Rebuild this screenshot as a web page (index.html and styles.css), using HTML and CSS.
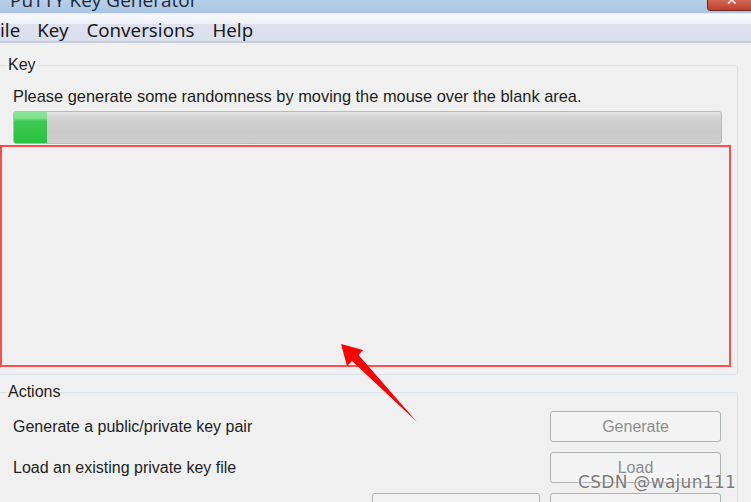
FILE: index.html
```html
<!DOCTYPE html>
<html>
<head>
<meta charset="utf-8">
<link rel="stylesheet" href="styles.css">
</head>
<body>
<div class="window">
  <div class="titlebar">
    <span class="title">PuTTY Key Generator</span>
    <span class="close"><span class="x">✕</span></span>
  </div>
  <div class="menubar">
    <span class="menu m-file">ile</span>
    <span class="menu">Key</span>
    <span class="menu">Conversions</span>
    <span class="menu">Help</span>
  </div>
  <div class="content">
    <fieldset class="group key-group">
      <legend>Key</legend>
      <div class="hint">Please generate some randomness by moving the mouse over the blank area.</div>
      <div class="progress"><div class="fill"></div></div>
      <div class="blank"></div>
    </fieldset>
    <fieldset class="group actions-group">
      <legend>Actions</legend>
      <div class="row">
        <span class="row-label">Generate a public/private key pair</span>
        <button class="btn">Generate</button>
      </div>
      <div class="row">
        <span class="row-label">Load an existing private key file</span>
        <button class="btn">Load</button>
      </div>
      <div class="row last">
        <button class="btn wide"></button>
        <button class="btn"></button>
      </div>
    </fieldset>
  </div>
  <svg class="arrow" width="751" height="502" viewBox="0 0 751 502">
    <polygon points="341,344 363,350 358.5,355 417,422 352,361 347,366" fill="#ff0000"/>
  </svg>
  <div class="watermark">CSDN @wajun111</div>
</div>
</body>
</html>
```
FILE: styles.css
```css
* { box-sizing: border-box; }
html, body { margin: 0; padding: 0; }
body {
  width: 751px;
  height: 502px;
  overflow: hidden;
  background: #f0f0f0;
  font-family: "Liberation Sans", Arial, sans-serif;
  color: #1e1e1e;
}
.window { position: relative; width: 751px; height: 502px; overflow: hidden; }

.titlebar {
  position: relative;
  height: 14px;
  background: linear-gradient(#b8cfe8, #a9c5e2);
  border-bottom: 1px solid #e4edf7;
  overflow: hidden;
}
.title {
  display: block;
  font-family: "Open Sans", "Noto Sans", sans-serif;
  font-size: 19px;
  line-height: 20px;
  margin-top: -10px;
  padding-left: 10px;
  color: #1c2a3a;
}
.close {
  position: absolute;
  right: -6px;
  top: -4px;
  width: 50px;
  height: 15px;
  background: linear-gradient(#d8735f, #c0402c);
  border: 1px solid #6e2a20;
  border-radius: 3px;
  text-align: center;
}
.close .x { color: #fff; font-size: 14px; line-height: 10px; display: block; margin-top: -2px; }

.menubar {
  display: flex;
  align-items: center;
  height: 29px;
  padding-top: 3px;
  background: linear-gradient(#f7f8fc 0%, #f0f2f8 35%, #dde1ef 38%, #dbe0ef 100%);
  border-bottom: 2px solid #c8ccd9;
  font-family: "Noto Sans", "Open Sans", sans-serif;
  font-size: 18.7px;
  color: #1a1a1a;
}
.menu { padding: 0 9px; }
.menu.m-file { padding-left: 0; padding-right: 8px; }

.content {
  display: flex;
  flex-direction: column;
  padding-top: 13px;
}
.group {
  margin: 0;
  border: 1px solid #dbe2e8;
  border-radius: 3px;
  padding: 0;
  min-width: 0;
}
.group legend {
  font-size: 16px;
  padding: 0 1px;
  margin-left: 7px;
  line-height: 18px;
  color: #1e1e1e;
}
.key-group {
  margin-left: -4px;
  width: 742px;
  height: 319px;
  padding-left: 3px;
}
.hint {
  font-size: 16.4px;
  line-height: 18px;
  margin-top: 13px;
  padding-left: 13px;
}
.progress {
  margin: 6px 0 0 13px;
  width: 709px;
  height: 33px;
  border: 1px solid #b9b9b9;
  border-radius: 3px;
  background: linear-gradient(#e6e6e6 0%, #d6d6d6 15%, #c9c9c9 60%, #cdcdcd 100%);
  position: relative;
  overflow: hidden;
}
.fill {
  width: 33px;
  height: 100%;
  background: linear-gradient(#8ee59a 0%, #7ee18c 20%, #3fc852 30%, #28c23f 100%);
}
.blank {
  margin-top: 1px;
  width: 731px;
  height: 222px;
  border: 2px solid #ff4d4d;
}

.actions-group {
  margin-top: 8px;
  margin-left: -4px;
  width: 742px;
  height: 130px;
  padding-left: 3px;
}
.row {
  display: flex;
  align-items: center;
  justify-content: space-between;
  height: 31px;
  padding-left: 13px;
  padding-right: 16px;
  margin-top: 10px;
}
.row:first-of-type { margin-top: 10px; }
.row-label { font-size: 16px; }
.btn {
  width: 171px;
  height: 31px;
  background: #f4f4f4;
  border: 1px solid #adb2b5;
  border-radius: 3px;
  font-family: "Liberation Sans", Arial, sans-serif;
  font-size: 16px;
  color: #8d8d8d;
  padding: 0;
}
.row.last { justify-content: flex-end; gap: 10px; }
.btn.wide { width: 168px; }

.arrow { position: absolute; left: 0; top: 0; pointer-events: none; }

.watermark {
  position: absolute;
  left: 578px;
  top: 472px;
  font-family: "DejaVu Sans", sans-serif;
  font-size: 17px;
  color: #7a7a7a;
  text-shadow: 0 0 2px #fff, 0 0 1px #fff;
  letter-spacing: 0.3px;
}
```
